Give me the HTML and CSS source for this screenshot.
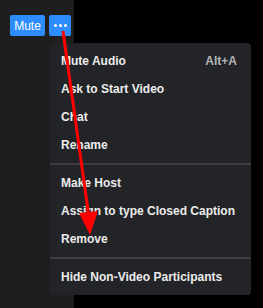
FILE: index.html
```html
<!DOCTYPE html>
<html>
<head>
<meta charset="utf-8">
<link rel="stylesheet" href="styles.css">
</head>
<body>
<div class="screen">
  <div class="panel">
    <div class="controls">
      <button class="btn btn-mute">Mute</button>
      <button class="btn btn-more"><span class="dot"></span><span class="dot"></span><span class="dot"></span></button>
    </div>
  </div>
  <div class="menu">
    <div class="item"><span>Mute Audio</span><span class="shortcut">Alt+A</span></div>
    <div class="item"><span>Ask to Start Video</span></div>
    <div class="item"><span>Chat</span></div>
    <div class="item"><span>Rename</span></div>
    <div class="sep"></div>
    <div class="item"><span>Make Host</span></div>
    <div class="item"><span>Assign to type Closed Caption</span></div>
    <div class="item"><span>Remove</span></div>
    <div class="sep"></div>
    <div class="item"><span>Hide Non-Video Participants</span></div>
  </div>
  <svg class="arrow" width="263" height="308" viewBox="0 0 263 308">
    <line x1="63" y1="31" x2="88.5" y2="214" stroke="#ff0000" stroke-width="3"/>
    <polygon points="79,213 98,211 90,235" fill="#ff0000"/>
  </svg>
</div>
</body>
</html>
```
FILE: styles.css
```css
html, body {
  margin: 0;
  padding: 0;
  background: #000;
}
.screen {
  position: relative;
  width: 263px;
  height: 308px;
  overflow: hidden;
  background: #000;
  font-family: "Liberation Sans", Arial, sans-serif;
}
.panel {
  width: 74px;
  height: 308px;
  background: #1e1e1e;
}
.controls {
  display: flex;
  gap: 4px;
  padding: 15px 0 0 10px;
}
.btn {
  border: none;
  margin: 0;
  height: 21px;
  border-radius: 2px;
  background: #2d8cff;
  color: #fff;
  font-family: "Liberation Sans", Arial, sans-serif;
  font-size: 12px;
  padding: 0;
  display: flex;
  align-items: center;
  justify-content: center;
}
.btn-mute {
  width: 35px;
}
.btn-more {
  width: 22px;
  gap: 2px;
}
.dot {
  width: 3px;
  height: 3px;
  border-radius: 50%;
  background: #fff;
}
.menu {
  position: absolute;
  left: 50px;
  top: 43px;
  width: 201px;
  height: 252px;
  box-sizing: border-box;
  padding: 4px 0;
  background: #232427;
  border-radius: 4px;
  display: flex;
  flex-direction: column;
}
.item {
  height: 28px;
  flex: none;
  display: flex;
  align-items: center;
  justify-content: space-between;
  padding: 0 14px 0 11px;
  color: #ececec;
  font-weight: bold;
  font-size: 12px;
}
.shortcut {
  color: #b4b4b6;
}
.sep {
  height: 2px;
  flex: none;
  background: #3c3d40;
  margin: 4px 0;
}
.arrow {
  position: absolute;
  left: 0;
  top: 0;
  pointer-events: none;
}
```
